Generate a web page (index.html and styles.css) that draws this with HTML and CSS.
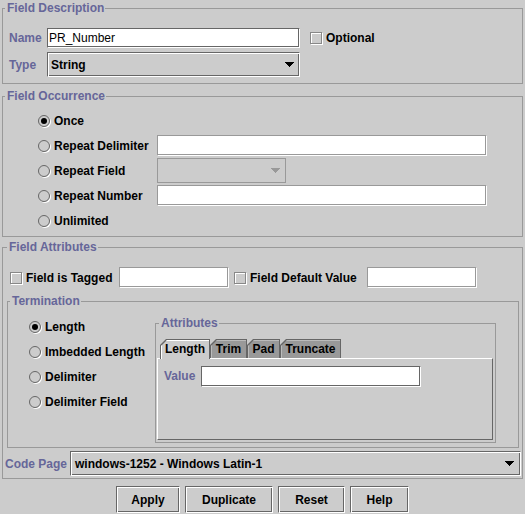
FILE: index.html
```html
<!DOCTYPE html>
<html lang="en">
<head>
    <meta charset="UTF-8">
    <meta name="viewport" content="width=device-width, initial-scale=1.0">
    <title>Field Properties</title>
    <link rel="stylesheet" href="styles.css">
</head>
<body>

    <!-- Field Description -->
    <fieldset class="group desc">
        <legend>Field Description</legend>
        <div class="desc-grid">
            <span class="key">Name</span>
            <input class="text dark name-field" type="text" value="PR_Number">
            <label class="check optional"><span class="box"></span>Optional</label>

            <span class="key">Type</span>
            <div class="combo type-combo">
                <span>String</span>
                <svg class="arrow" width="9" height="5" viewBox="0 0 9 5"><polygon points="0,0 9,0 4.5,5"/></svg>
            </div>
        </div>
    </fieldset>

    <!-- Field Occurrence -->
    <fieldset class="group occurrence">
        <legend>Field Occurrence</legend>
        <div class="occ-grid">
            <label class="radio on"><span class="dot"></span>Once</label>

            <label class="radio"><span class="dot"></span>Repeat Delimiter</label>
            <input class="text wide" type="text">

            <label class="radio"><span class="dot"></span>Repeat Field</label>
            <div class="combo disabled short">
                <span></span>
                <svg class="arrow" width="9" height="5" viewBox="0 0 9 5"><polygon points="0,0 9,0 4.5,5"/></svg>
            </div>

            <label class="radio"><span class="dot"></span>Repeat Number</label>
            <input class="text wide" type="text">

            <label class="radio"><span class="dot"></span>Unlimited</label>
        </div>
    </fieldset>

    <!-- Field Attributes -->
    <fieldset class="group attributes">
        <legend>Field Attributes</legend>

        <div class="tag-row">
            <label class="check tagged"><span class="box"></span>Field is Tagged</label>
            <input class="text small" type="text">
            <label class="check default-value"><span class="box"></span>Field Default Value</label>
            <input class="text small" type="text">
        </div>

        <fieldset class="group termination">
            <legend>Termination</legend>
            <div class="term-body">
                <div class="term-radios">
                    <label class="radio on"><span class="dot"></span>Length</label>
                    <label class="radio"><span class="dot"></span>Imbedded Length</label>
                    <label class="radio"><span class="dot"></span>Delimiter</label>
                    <label class="radio"><span class="dot"></span>Delimiter Field</label>
                </div>

                <fieldset class="group attr-box">
                    <legend>Attributes</legend>
                    <div class="tabs">
                        <div class="tab selected tab-length"><span>Length</span></div>
                        <div class="tab tab-trim"><span>Trim</span></div>
                        <div class="tab tab-pad"><span>Pad</span></div>
                        <div class="tab tab-truncate"><span>Truncate</span></div>
                    </div>
                    <div class="tab-panel">
                        <span class="key value-key">Value</span>
                        <input class="text dark value-field" type="text">
                    </div>
                </fieldset>
            </div>
        </fieldset>

        <div class="code-row">
            <span class="key code-key">Code Page</span>
            <div class="combo code-combo">
                <span>windows-1252 - Windows Latin-1</span>
                <svg class="arrow" width="9" height="5" viewBox="0 0 9 5"><polygon points="0,0 9,0 4.5,5"/></svg>
            </div>
        </div>
    </fieldset>

    <!-- Кнопки -->
    <div class="buttons">
        <button class="btn-apply">Apply</button>
        <button class="btn-duplicate">Duplicate</button>
        <button class="btn-reset">Reset</button>
        <button class="btn-help">Help</button>
    </div>

</body>
</html>
```

FILE: styles.css
```css
/* Base */
body {
    margin: 0;
    padding: 1px 2px 0;
    background-color: #cccccc;
    font-family: "Liberation Sans", Arial, sans-serif;
    font-size: 12px;
    font-weight: bold;
    color: #000;
    overflow: hidden;
}

/* Titled group boxes */
.group {
    margin: 0;
    padding: 0;
    border: 1px solid #999999;
    min-width: 0;
}

.group legend {
    margin-left: 2px;
    padding: 0 1px 0 2px;
    line-height: 15px;
    color: #666699;
}

.key {
    color: #666699;
}

/* Text fields */
.text {
    box-sizing: border-box;
    height: 21px;
    margin: 0;
    padding: 0 1px;
    background: #fff;
    border: 1px solid;
    border-color: #999 #fff #fff #999;
    box-shadow: inset -1px -1px #999;
    font: 12px "Liberation Sans", Arial, sans-serif;
    color: #000;
    outline: none;
}

.text.dark {
    border-color: #666 #fff #fff #666;
    box-shadow: inset -1px -1px #666;
}

/* Combo boxes */
.combo {
    box-sizing: border-box;
    display: flex;
    align-items: center;
    justify-content: space-between;
    height: 25px;
    padding: 0 5px 0 3px;
    border: 1px solid;
    border-color: #666 #fff #fff #666;
    box-shadow: inset 1px 1px #fff, inset -1px -1px #666;
}

.combo .arrow {
    display: block;
    shape-rendering: crispEdges;
    fill: #000;
}

.combo.disabled {
    border-color: #999;
    box-shadow: none;
}

.combo.disabled .arrow {
    fill: #999;
}

/* Check boxes */
.check {
    display: flex;
    align-items: center;
}

.box {
    box-sizing: border-box;
    width: 12px;
    height: 12px;
    margin-right: 4px;
    border: 1px solid #888;
    box-shadow: inset 1px 1px #fff, 1px 1px 0 #fff;
}

/* Radio buttons */
.radio {
    display: flex;
    align-items: center;
}

.dot {
    position: relative;
    box-sizing: border-box;
    width: 12px;
    height: 12px;
    margin-right: 4px;
    border: 1px solid #666;
    border-radius: 50%;
    box-shadow: 1px 1px 0 #fff;
}

.radio.on .dot::after {
    content: "";
    position: absolute;
    left: 2px;
    top: 2px;
    width: 6px;
    height: 6px;
    border-radius: 50%;
    background: #000;
}

/* Field Description */
.desc {
    margin-top: 0;
}

.desc-grid {
    display: grid;
    grid-template-columns: 38px 253px auto;
    row-gap: 4px;
    align-items: center;
    padding: 12px 0 6px 6px;
}

.name-field {
    height: 20px;
}

.optional {
    margin-left: 10px;
}

/* Field Occurrence */
.occurrence {
    margin-top: 5px;
}

.occ-grid {
    display: grid;
    grid-template-columns: 119px auto;
    grid-auto-rows: 25px;
    align-items: center;
    justify-items: start;
    padding: 4px 0 3px 35px;
}

.occ-grid .radio {
    grid-column: 1;
}

.occ-grid .text,
.occ-grid .combo {
    grid-column: 2;
}

.wide {
    width: 330px;
}

.short {
    width: 129px;
}

/* Field Attributes */
.attributes {
    margin-top: 3px;
    padding: 0 1px 2px 2px;
}

.tag-row {
    display: flex;
    align-items: center;
    margin: 12px 0 0 5px;
    height: 21px;
}

.tagged {
    width: 109px;
}

.default-value {
    width: 133px;
    margin-left: 5px;
}

.small {
    width: 110px;
}

/* Termination */
.termination {
    margin: 6px 2px 0;
}

.term-body {
    display: grid;
    grid-template-columns: 126px 341px;
    align-items: start;
    padding: 0 0 4px 21px;
}

.term-radios {
    display: flex;
    flex-direction: column;
    padding-top: 5px;
}

.term-radios .radio {
    height: 25px;
}

.attr-box {
    margin-top: 7px;
    padding: 0 2px 2px 1px;
}

/* Tabs */
.tabs {
    position: relative;
    z-index: 1;
    display: flex;
    height: 19px;
    margin: 8px 0 0 3px;
}

.tab {
    box-sizing: border-box;
    height: 19px;
    padding: 1px 1px 0;
    background: #666;
    clip-path: polygon(0 6px, 6px 0, 100% 0, 100% 100%, 0 100%);
}

.tab span {
    display: block;
    height: 100%;
    line-height: 18px;
    text-align: center;
    background: #999;
    box-shadow: inset 1px 1px #bbb;
    clip-path: polygon(0 6px, 6px 0, 100% 0, 100% 100%, 0 100%);
}

.tab.selected {
    height: 20px;
}

.tab.selected span {
    background: #ccc;
    box-shadow: inset 1px 1px #fff;
}

.tab-length { width: 50px; }
.tab-trim { width: 37px; }
.tab-pad { width: 33px; }
.tab-truncate { width: 61px; }

.tab-panel {
    box-sizing: border-box;
    display: flex;
    align-items: center;
    height: 82px;
    align-items: flex-start;
    padding: 7px 0 0 6px;
    border: 1px solid;
    border-color: #fff #666 #666 #fff;
}

.value-key {
    width: 37px;
    line-height: 21px;
}

.value-field {
    width: 220px;
}

/* Code Page */
.code-row {
    display: flex;
    align-items: center;
    margin-top: 3px;
}

.code-key {
    width: 65px;
}

.code-combo {
    flex: 1;
    padding-left: 4px;
    padding-right: 6px;
}

/* Buttons */
.buttons {
    display: flex;
    justify-content: center;
    gap: 5px;
    margin-top: 7px;
}

.buttons button {
    box-sizing: border-box;
    height: 27px;
    padding: 0;
    font: inherit;
    color: #000;
    background: #ccc;
    border: 1px solid;
    border-color: #666 #fff #fff #666;
    box-shadow: inset 1px 1px #fff, inset -1px -1px #666;
}

.btn-apply { width: 64px; }
.btn-duplicate { width: 88px; }
.btn-reset { width: 67px; }
.btn-help { width: 59px; }
```
